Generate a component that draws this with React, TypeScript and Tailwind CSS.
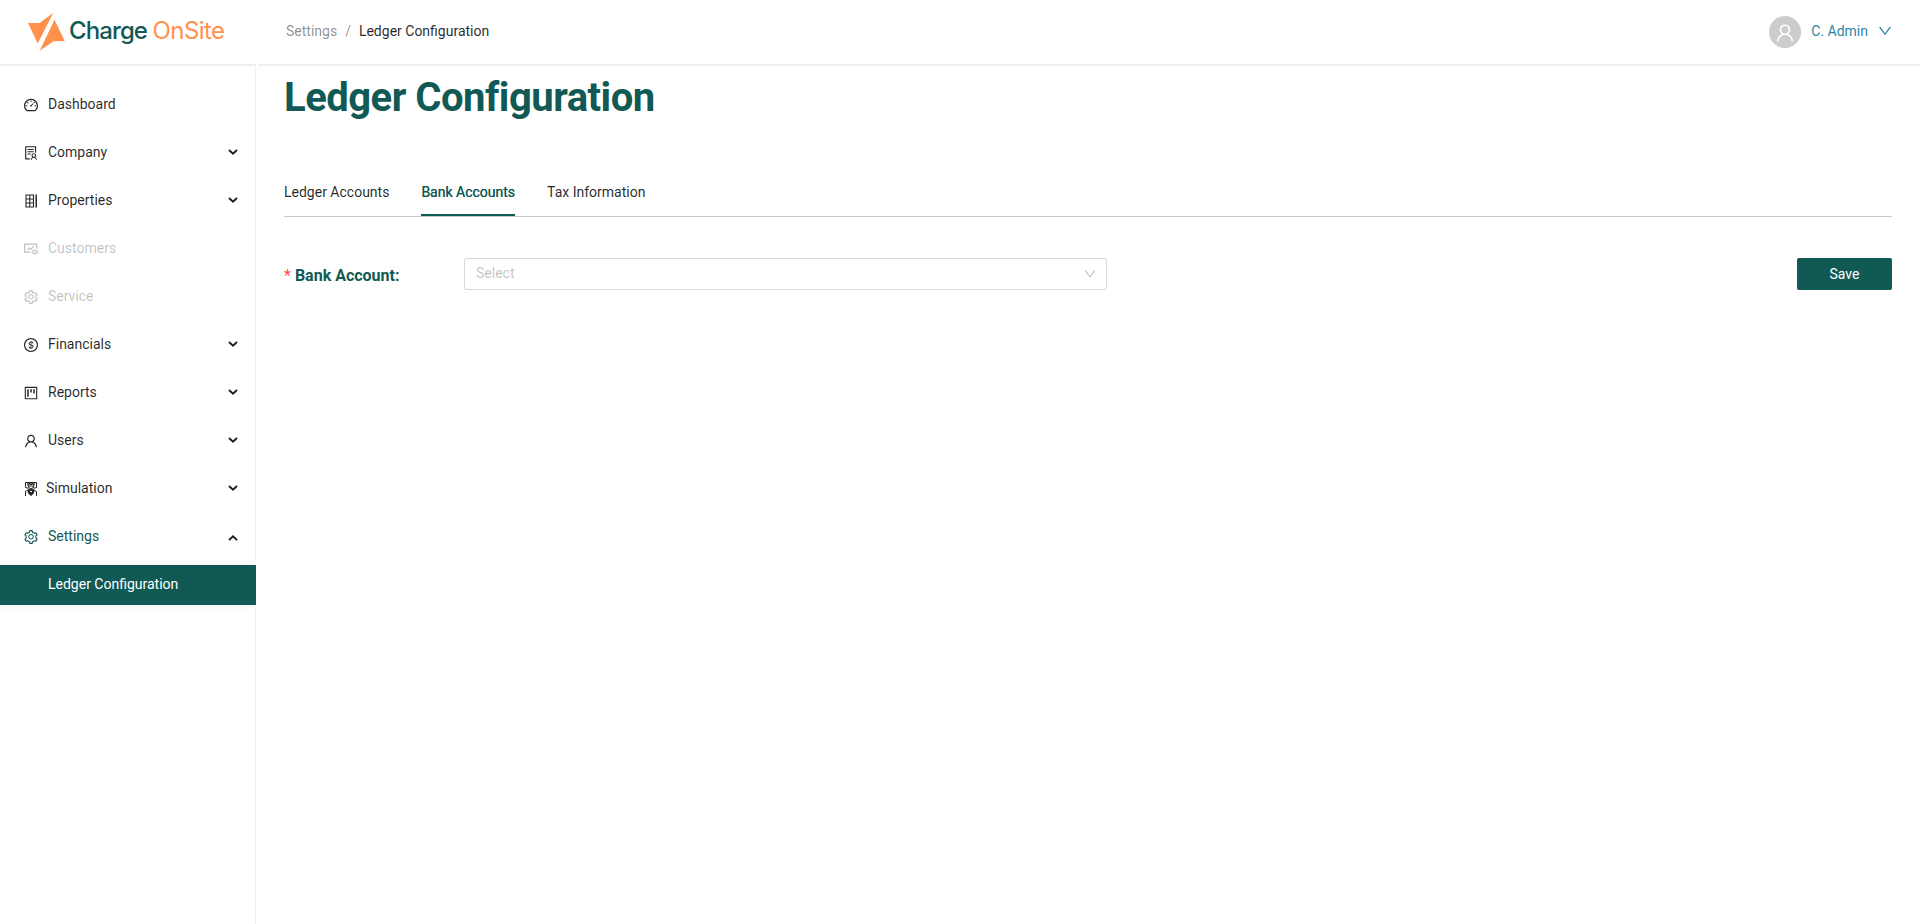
import React from 'react';
import {
  AiOutlineDashboard,
  AiOutlineSolution,
  AiOutlineFundView,
  AiOutlineSetting,
  AiOutlineDollarCircle,
  AiOutlineProject,
  AiOutlineUser,
  AiOutlineDown,
} from 'react-icons/ai';

function PropertiesIcon() {
  return (
    <svg width="16" height="16" viewBox="0 0 16 16" fill="none" stroke="currentColor">
      <path d="M3 2h7.500v12H3zM6.750 2v12M3 6h7.500M3 10h7.500" strokeWidth="1.100" />
      <path d="M13.200 1.500v13" strokeWidth="1.500" />
    </svg>
  );
}

function SimulationIcon() {
  return (
    <svg width="16" height="16" viewBox="0 0 16 16" fill="none" stroke="currentColor" strokeWidth="1">
      <path d="M2.500 6.500v-5h11v5M2.500 6.500l3 .8M13.500 6.500l-3 .8M2.500 15v-4.500l2.500-1.500M13.500 15v-4.500L11 9M4.800 1.500v2.500M11.200 1.500v2.500" />
      <circle cx="8" cy="4.800" r="2.800" />
      <path d="M5.500 5h5M6.500 3.500h3" />
      <path d="M5.300 8.700h5.400v3.300L8 14.500 5.300 12z" fill="currentColor" />
      <path d="M7 10.500h2" stroke="#fff" />
    </svg>
  );
}

function Caret({ up = false }: { up?: boolean }) {
  return (
    <svg className={up ? 'mt-[3px]' : ''} width="10" height="8" viewBox="0 0 10 8" fill="none" stroke="#1f1f1f" strokeWidth="2">
      <path d={up ? 'M1 6.1 5 2.300 9 6.100' : 'M1 1.900 5 5.700 9 1.900'} />
    </svg>
  );
}

type Item = { label: string; icon: React.ReactNode; caret?: 'down' | 'up'; tone?: string; gap?: string };

const items: Item[] = [
  { label: 'Dashboard', icon: <AiOutlineDashboard size={16} /> },
  { label: 'Company', icon: <AiOutlineSolution size={16} />, caret: 'down' },
  { label: 'Properties', icon: <PropertiesIcon />, caret: 'down' },
  { label: 'Customers', icon: <AiOutlineFundView size={16} />, tone: 'text-black/25' },
  { label: 'Service', icon: <AiOutlineSetting size={16} />, tone: 'text-black/25' },
  { label: 'Financials', icon: <AiOutlineDollarCircle size={16} />, caret: 'down' },
  { label: 'Reports', icon: <AiOutlineProject size={16} />, caret: 'down' },
  { label: 'Users', icon: <AiOutlineUser size={16} />, caret: 'down' },
  { label: 'Simulation', icon: <SimulationIcon />, caret: 'down', gap: 'gap-[7px]' },
  { label: 'Settings', icon: <AiOutlineSetting size={16} />, caret: 'up', tone: 'text-[#115954]' },
];

function Logo() {
  return (
    <div className="flex h-full items-start pt-[13px] pl-7">
      <svg width="37" height="38" viewBox="0 0 37 38" fill="#ff914d">
        <path d="M0 10 11.500 10 25.200 0 9.700 30.500z" />
        <path d="M26.500 6.800 36.700 28 25.500 28.200 11.700 37.800z" />
      </svg>
      <div className="ml-1 whitespace-nowrap font-['Inter',sans-serif] text-[24px] leading-[36px] font-medium tracking-[-0.9px] text-[#115954]">
        Charge <span className="font-normal tracking-[-0.6px] text-[#ff914d]">OnSite</span>
      </div>
    </div>
  );
}

function Sidebar() {
  return (
    <aside className="w-64 shrink-0 border-r border-[#f0f0f0] pt-[18px]">
      <nav>
        {items.map((it) => (
          <div
            key={it.label}
            className={`mb-2 flex h-10 items-center pr-[17px] pl-[23px] ${it.gap ?? 'gap-[9px]'} ${it.tone ?? 'text-black/85'}`}
          >
            <span className="mt-[2px] shrink-0">{it.icon}</span>
            <span className="flex-1">{it.label}</span>
            {it.caret && <Caret up={it.caret === 'up'} />}
          </div>
        ))}
      </nav>
      <div className="-mt-[3px] -mr-px bg-[#fafafa] py-1">
        <div className="flex h-10 items-center bg-[#115954] pb-[2px] pl-12 text-white">Ledger Configuration</div>
      </div>
    </aside>
  );
}

export default function App() {
  return (
    <div className="flex h-[924px] w-full flex-col overflow-hidden bg-white font-['Roboto',sans-serif] text-[14px] leading-[22px] text-black/85">
      <header className="flex h-[66px] shrink-0 gap-[2px]">
        <div className="w-64 shrink-0 border-b-2 border-[#f0f0f0]">
          <Logo />
        </div>
        <div className="flex flex-1 items-start justify-between border-b-2 border-[#f0f0f0] pr-7 pl-7">
          <div className="flex pt-5">
            <span className="text-black/45">Settings</span>
            <span className="mx-2 text-black/45">/</span>
            <span>Ledger Configuration</span>
          </div>
          <div className="flex items-center pt-4 text-[#2e86a5]">
            <span className="flex size-8 items-center justify-center rounded-full bg-[#ccc] pt-px text-white">
              <AiOutlineUser size={22} />
            </span>
            <span className="mt-[-2px] ml-[10px]">C. Admin</span>
            <AiOutlineDown className="mt-[-2px] -mr-px ml-[9px]" size={16} />
          </div>
        </div>
      </header>
      <div className="flex flex-1">
        <Sidebar />
        <main className="flex-1 pr-7 pl-7">
          <h1 className="mt-[7px] text-[40px] leading-[50px] font-bold tracking-[-0.5px] text-[#115954]">Ledger Configuration</h1>
          <div className="mt-[46px] flex h-[48px] gap-8 border-b border-[#c4cdd1]">
            <div className="pt-3">Ledger Accounts</div>
            <div className="border-b-2 border-[#115954] pt-3 text-[#115954] [text-shadow:0_0_0.25px_currentColor]">Bank Accounts</div>
            <div className="pt-3">Tax Information</div>
          </div>
          <div className="mt-[41px] flex items-start">
            <div className="flex h-8 w-[180px] items-center pt-[3px] text-[16px] font-bold text-[#115954]">
              <span className="mr-1 font-normal text-[#ff4d4f]">*</span>Bank Account:
            </div>
            <div className="flex h-8 w-[643px] items-center justify-between rounded-[2px] border border-[#d9d9d9] pr-[9px] pl-[11px] text-black/25">
              <span className="mt-[-2px]">Select</span>
              <AiOutlineDown size={14} />
            </div>
            <button className="ml-auto h-8 w-[95px] rounded-[2px] bg-[#115954] text-white">Save</button>
          </div>
        </main>
      </div>
    </div>
  );
}
